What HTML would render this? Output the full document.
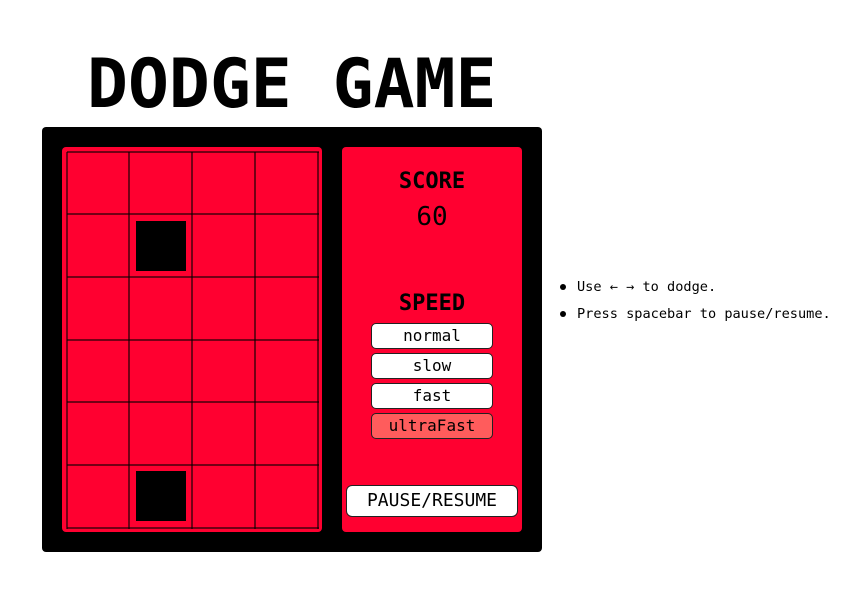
<!DOCTYPE html>
<html><head><style>
*{margin:0;padding:0;box-sizing:border-box}
body{width:855px;height:614px;background:#fff;position:relative;font-family:"DejaVu Sans Mono","Liberation Mono",monospace;overflow:hidden}
.a{position:absolute}
h1{position:absolute;left:87px;top:45px;font-size:68px;font-weight:bold;line-height:80px;letter-spacing:0}
.board{left:42px;top:127px;width:500px;height:425px;background:#000;border-radius:4px}
.lp{left:62px;top:147px;width:260px;height:385px;background:#ff0030;border-radius:4px}
.rp{left:342px;top:147px;width:180px;height:385px;background:#ff0030;border-radius:4px}
.vl{position:absolute;width:2px;top:152px;height:377px;background:rgba(0,0,0,.55)}
.hl{position:absolute;height:2px;left:67px;width:252px;background:rgba(0,0,0,.55)}
.sq{position:absolute;width:50px;height:50px;background:#000}
.t{position:absolute;left:342px;width:180px;text-align:center}
.btn{position:absolute;left:371px;width:122px;height:26px;background:#fff;border:1px solid #222;border-radius:5px;text-align:center;font-size:16px;line-height:24px}
ul{position:absolute;left:560px;top:277px;list-style:none;font-size:13.6px}
li{position:relative;padding-left:17px;height:27px;line-height:20px}
li:before{content:"";position:absolute;left:0;top:7px;width:6px;height:6px;border-radius:50%;background:#000}
</style></head><body>
<h1>DODGE GAME</h1>
<div class="a board"></div>
<div class="a lp"></div>
<div class="a rp"></div>
<div class="vl" style="left:66px"></div>
<div class="vl" style="left:128px"></div>
<div class="vl" style="left:191px"></div>
<div class="vl" style="left:254px"></div>
<div class="vl" style="left:317px"></div>
<div class="hl" style="top:151px"></div>
<div class="hl" style="top:213px"></div>
<div class="hl" style="top:276px"></div>
<div class="hl" style="top:339px"></div>
<div class="hl" style="top:401px"></div>
<div class="hl" style="top:464px"></div>
<div class="hl" style="top:527px"></div>
<div class="sq" style="left:136px;top:221px"></div>
<div class="sq" style="left:136px;top:471px"></div>
<div class="t" style="top:168px;font-size:22px;font-weight:bold;line-height:28px">SCORE</div>
<div class="t" style="top:201px;font-size:26px;line-height:32px">60</div>
<div class="t" style="top:290px;font-size:22px;font-weight:bold;line-height:28px">SPEED</div>
<div class="btn" style="top:323px">normal</div>
<div class="btn" style="top:353px">slow</div>
<div class="btn" style="top:383px">fast</div>
<div class="btn" style="top:413px;background:#ff5c5c">ultraFast</div>
<div class="btn" style="left:346px;top:485px;width:172px;height:32px;font-size:18px;line-height:30px;border-radius:6px">PAUSE/RESUME</div>
<ul><li>Use ← → to dodge.</li><li>Press spacebar to pause/resume.</li></ul>
</body></html>
